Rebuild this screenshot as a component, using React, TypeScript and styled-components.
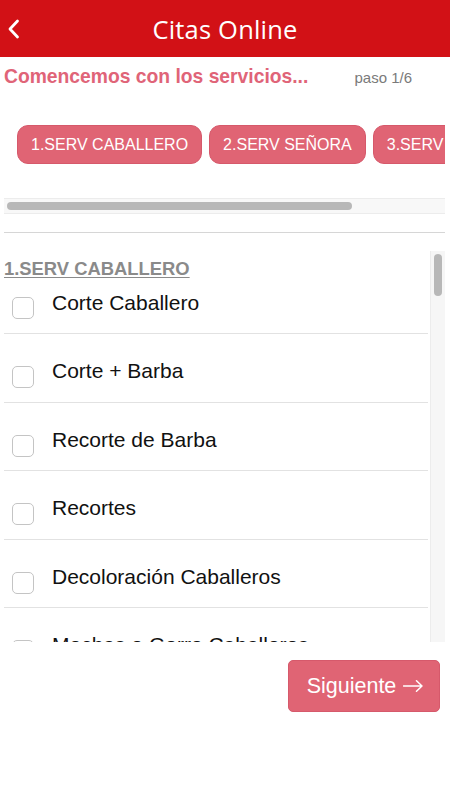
import React from 'react'
import styled, { createGlobalStyle } from 'styled-components'

const GlobalStyle = createGlobalStyle`
  html, body {
    margin: 0;
    padding: 0;
    background: #ffffff;
  }
  body {
    font-family: 'Liberation Sans', Arial, sans-serif;
  }
`

const Page = styled.div`
  width: 450px;
  height: 800px;
  display: flex;
  flex-direction: column;
  background: #ffffff;
  overflow: hidden;
`

const Header = styled.header`
  height: 57px;
  flex-shrink: 0;
  display: grid;
  grid-template-columns: 60px 1fr 60px;
  align-items: center;
  background-color: #d21116;
`

const BackButton = styled.button`
  display: flex;
  align-items: center;
  padding: 0 0 0 8px;
  height: 100%;
  border: none;
  background: transparent;
  cursor: pointer;
`

const Title = styled.h1`
  margin: 0;
  text-align: center;
  color: #ffffff;
  font-family: 'Open Sans', sans-serif;
  font-weight: 500;
  font-size: 25.5px;
  letter-spacing: 0.2px;
`

const SubRow = styled.div`
  display: flex;
  align-items: baseline;
  justify-content: space-between;
  padding: 9px 38px 0 4px;
  height: 31px;
`

const Lead = styled.h2`
  margin: 0;
  color: #e06478;
  font-weight: 700;
  font-size: 19.3px;
`

const Step = styled.span`
  color: #7a7a7a;
  font-size: 15px;
`

const TabStrip = styled.div`
  margin: 28px 5px 0 17px;
  display: flex;
  gap: 7px;
  overflow: hidden;
`

const Tab = styled.button`
  flex-shrink: 0;
  height: 39px;
  padding: 0 13px;
  border: 1px solid #d6596b;
  border-radius: 11px;
  background-color: #e06474;
  color: #ffffff;
  font-family: 'Liberation Sans', Arial, sans-serif;
  font-size: 16px;
  white-space: nowrap;
`

const HTrack = styled.div`
  margin: 34px 5px 0 4px;
  height: 11px;
  padding: 3px 0 0 3px;
  background: #f8f8f8;
  border-top: 1px solid #ececec;
  border-bottom: 1px solid #ececec;
`

const HThumb = styled.div`
  width: 345px;
  height: 8px;
  border-radius: 4px;
  background: #b8b8b8;
`

const Divider = styled.hr`
  margin: 18px 5px 0 4px;
  border: none;
  border-top: 1px solid #d6d6d6;
`

const ListPanel = styled.div`
  margin: 18px 5px 0 4px;
  height: 391px;
  display: flex;
  overflow: hidden;
`

const ListBody = styled.div`
  flex: 1;
  min-width: 0;
  padding-right: 2px;
`

const VTrack = styled.div`
  width: 15px;
  flex-shrink: 0;
  padding: 3px 0 0 3px;
  background: #f6f6f6;
  border-left: 1px solid #ececec;
  box-sizing: border-box;
`

const VThumb = styled.div`
  width: 8px;
  height: 42px;
  border-radius: 4px;
  background: #b8b8b8;
`

const GroupTitle = styled.h3`
  margin: 0;
  padding-top: 8px;
  line-height: 20px;
  font-size: 18.4px;
  font-weight: 700;
  color: #8a8a8a;
  text-decoration: underline;
  text-underline-offset: 2px;
`

const Row = styled.label<{ $first?: boolean }>`
  display: flex;
  align-items: flex-start;
  gap: 18px;
  height: ${p => (p.$first ? '54px' : '67.5px')};
  padding-left: 8px;
  border-bottom: 1px solid #e2e2e2;
  box-sizing: content-box;
`

const Box = styled.span<{ $first?: boolean }>`
  flex-shrink: 0;
  width: 22px;
  height: 22px;
  margin-top: ${p => (p.$first ? '18px' : '32px')};
  border: 1px solid #c4c4c4;
  border-radius: 5px;
  box-sizing: border-box;
  background: #ffffff;
`

const ItemName = styled.span<{ $first?: boolean }>`
  padding-top: ${p => (p.$first ? '12px' : '25px')};
  line-height: 24px;
  font-size: 21px;
  color: #111111;
  white-space: nowrap;
`

const Footer = styled.div`
  display: flex;
  justify-content: flex-end;
  padding: 18px 10px 0 0;
`

const NextButton = styled.button`
  width: 152px;
  height: 52px;
  display: flex;
  align-items: center;
  justify-content: center;
  gap: 7px;
  padding: 0 0 0 2px;
  border: 1px solid #d6596b;
  border-radius: 5px;
  background-color: #e06474;
  color: #ffffff;
  font-family: 'Liberation Sans', Arial, sans-serif;
  font-size: 21.5px;
`

const services = [
  'Corte Caballero',
  'Corte + Barba',
  'Recorte de Barba',
  'Recortes',
  'Decoloración Caballeros',
  'Mechas o Gorro Caballeros',
]

const tabs = ['1.SERV CABALLERO', '2.SERV SEÑORA', '3.SERV ESTÉTICA']

export default function App() {
  return (
    <Page>
      <GlobalStyle />
      <Header>
        <BackButton aria-label='Volver'>
          <svg width='12' height='20' viewBox='0 0 12 20'>
            <polyline
              points='9.5,2 2,10 9.5,18'
              fill='none'
              stroke='#ffffff'
              strokeWidth='2.8'
              strokeLinecap='round'
              strokeLinejoin='round'
            />
          </svg>
        </BackButton>
        <Title>Citas Online</Title>
        <span />
      </Header>
      <SubRow>
        <Lead>Comencemos con los servicios...</Lead>
        <Step>paso 1/6</Step>
      </SubRow>
      <TabStrip>
        {tabs.map(t => (
          <Tab key={t}>{t}</Tab>
        ))}
      </TabStrip>
      <HTrack>
        <HThumb />
      </HTrack>
      <Divider />
      <ListPanel>
        <ListBody>
          <GroupTitle>1.SERV CABALLERO</GroupTitle>
          {services.map((s, i) => (
            <Row key={s} $first={i === 0}>
              <Box $first={i === 0} />
              <ItemName $first={i === 0}>{s}</ItemName>
            </Row>
          ))}
        </ListBody>
        <VTrack>
          <VThumb />
        </VTrack>
      </ListPanel>
      <Footer>
        <NextButton>
          Siguiente
          <svg width='20' height='12' viewBox='0 0 20 12'>
            <path
              d='M0.5 6H19M13.5 0.8L19 6L13.5 11.2'
              fill='none'
              stroke='#ffffff'
              strokeWidth='1.5'
              strokeLinecap='round'
              strokeLinejoin='round'
            />
          </svg>
        </NextButton>
      </Footer>
    </Page>
  )
}
